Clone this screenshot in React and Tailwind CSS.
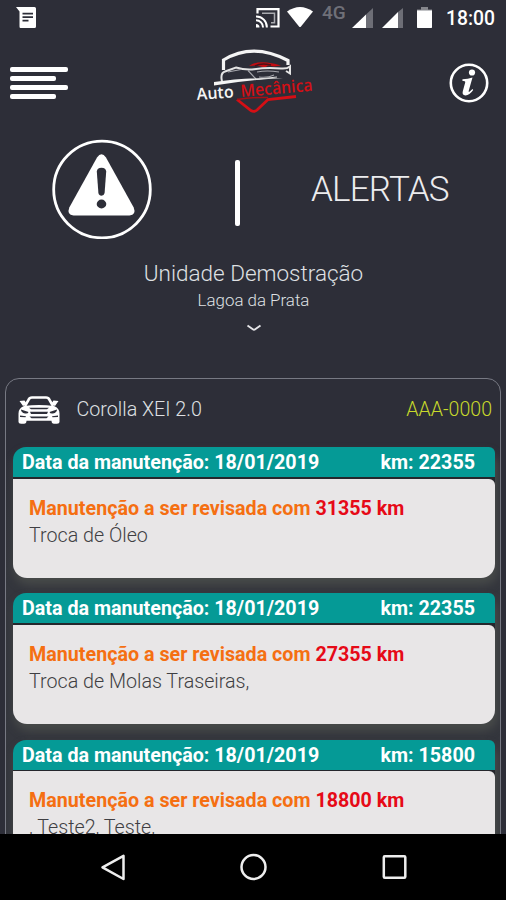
const reviews = [
    { id: 1, date: "18/01/2019", km: "22355", nextKm: "31355", items: "Troca de Óleo" },
    { id: 2, date: "18/01/2019", km: "22355", nextKm: "27355", items: "Troca de Molas Traseiras," },
    { id: 3, date: "18/01/2019", km: "15800", nextKm: "18800", items: ", Teste2, Teste," },
];

function StatusBar() {
    return (
        <div className="h-9 shrink-0 flex items-start pl-4 pr-[11px] pt-[7px] text-white">
            <svg className="w-[21px] h-[21px]" viewBox="0 0 21 21">
                <path d="M0 0h18.500q1.500 0 1.500 1.500v18q0 1.500-1.500 1.500h-14Q3.500 21 3.500 19.500V4.500Z" fill="#fff" />
                <path d="M6.500 6.700h10.500M6.500 10.200h10.500M6.500 13.700h6" stroke="#2d2e38" strokeWidth="1.700" />
            </svg>
            <svg className="ml-auto w-6 h-5 mt-px" viewBox="0 0 24 20" fill="none" stroke="#fff">
                <path d="M1.500 5.500V1.200H22.500V18.500H14.500" strokeWidth="2.200" />
                <path d="M6 5.200H18.500V14.800H15" strokeWidth="1.500" stroke="#aaabb0" />
                <path d="M0 8.500A10.500 10.500 0 0 1 10.800 19.500M0 12.300A7 7 0 0 1 7 19.500" strokeWidth="2" />
                <path d="M0 16q3.500.2 3.500 3.500H0Z" fill="#fff" stroke="none" />
            </svg>
            <svg className="ml-[7px] w-[26px] h-5" viewBox="0 0 26 20">
                <path d="M0 4.500Q13-4.500 26 4.500L14 19.500q-1 1-2 0Z" fill="#fff" />
            </svg>
            <span className="ml-[9px] w-[24px] -mt-[4px] text-[19px] leading-[20px] font-medium text-[#6f7078]">4G</span>
            <svg className="ml-[6px] mt-px w-[21px] h-5" viewBox="0 0 21 20">
                <path d="M14 6.500 21 0V20H14Z" fill="#6d6e76" />
                <path d="M0 20 14 6.500V20Z" fill="#fff" />
            </svg>
            <svg className="ml-[9px] mt-px w-[21px] h-5" viewBox="0 0 21 20">
                <path d="M16 4 21 0V20H16Z" fill="#6d6e76" />
                <path d="M0 20 16 4V20Z" fill="#fff" />
            </svg>
            <svg className="ml-[14px] w-[15px] h-[21px]" viewBox="0 0 15 21">
                <path d="M4 0h7v2.500h4V21H0V2.500H4Z" fill="#85868c" />
                <path d="M0 3.500h15V20q0 1-1 1H1q-1 0-1-1Z" fill="#fff" />
            </svg>
            <span className="ml-[13px] w-[50px] mt-px text-right text-[19.300px] leading-[22px] font-medium">18:00</span>
        </div>
    );
}

function Logo() {
    return (
        <svg className="w-[120px] h-[68px]" viewBox="0 0 120 68" fill="none">
            <path d="M28.500 24V14Q58-4 93 14.500V19" stroke="#f4f4f4" strokeWidth="3.200" />
            <path d="M54 20Q61 15 72 16.500Q80 17.500 86 19.500L79 20.500 73 19.500 70 21.500 62 19.500Z" fill="#c40d12" />
            <path d="M60 20q6-3.500 16-1" stroke="#4c1118" strokeWidth="1.500" />
            <path d="M27 35.500Q25 27 30 25.500L41 21.500Q49 24 57 23.500Q72 21 86 22.500Q92 23 95 20.500V27.500L91 25" stroke="#e4e4e4" strokeWidth="2" />
            <path d="M33 26 46 23.500M53 24.500l8 8.500M62 26q10-2 22 0M64 31q9 1 15-2" stroke="#a7a7ad" strokeWidth="1.100" />
            <path d="M19 36Q50 31.500 88 32Q50 34 19 39.500Z" fill="#f4f4f4" />
            <path d="M59 33.500 82 31" stroke="#dedede" />
            <text x="2" y="54" transform="rotate(-4 2 53)" fill="#f5f5f5" fontFamily="Open Sans, sans-serif" fontSize="16.500" fontWeight="600" textLength="37" lengthAdjust="spacingAndGlyphs">Auto</text>
            <text x="46" y="51" transform="rotate(-5 46 50)" fill="#d40f15" fontFamily="Open Sans, sans-serif" fontSize="17" fontWeight="600" textLength="72" lengthAdjust="spacingAndGlyphs">Mecânica</text>
            <path d="M42 53.500 56 64.500Q59 66.500 62 64L73 53.500 101 50.500" stroke="#d40f15" strokeWidth="2.800" />
            <path d="M42 53.500Q58 51 73 51.500" stroke="#a80e14" strokeWidth="1.500" />
        </svg>
    );
}

function AppBar() {
    return (
        <header className="h-[92px] shrink-0 flex pl-[10px] pr-[17px]">
            <button className="w-[58px] h-8 mt-[31px] flex flex-col justify-between">
                <span className="block w-[58px] h-[5px] rounded-[2px] bg-white" />
                <span className="block w-[46px] h-[5px] rounded-[2px] bg-white" />
                <span className="block w-[58px] h-[5px] rounded-[2px] bg-white" />
                <span className="block w-[46px] h-[5px] rounded-[2px] bg-white" />
            </button>
            <div className="mt-[10px] ml-[127px]">
                <Logo />
            </div>
            <button className="w-10 h-10 mt-[27px] ml-auto">
                <svg className="w-10 h-10" viewBox="0 0 40 40">
                    <circle cx="20" cy="20" r="18.200" fill="none" stroke="#fff" strokeWidth="2.600" />
                    <circle cx="23" cy="9.500" r="3.100" fill="#fff" />
                    <path d="M13.500 16.300Q19 16 23.500 14.500L19.800 27.500Q19.200 29.800 21 28.300L23.500 26 24.200 27Q20.500 32.400 16.400 32.400Q12.800 32 13.800 28.200L16.200 19.500Q16.700 17.800 13.300 17.800Z" fill="#fff" />
                </svg>
            </button>
        </header>
    );
}

function PageTitle() {
    return (
        <section className="h-[124px] shrink-0 flex items-start pl-[52px]">
            <svg className="w-[100px] h-[100px] mt-[11px]" viewBox="0 0 100 100">
                <circle cx="50" cy="50.500" r="48.300" fill="none" stroke="#fff" strokeWidth="2.800" />
                <path d="M45 18.500Q49.500 12 54 18.500L81.700 68.500Q84.500 75.800 77.500 76.500H21.500Q14.500 75.800 17.300 68.500Z" fill="#fff" />
                <path d="M44.800 32.500Q45 28.700 49.500 28.700T54.200 32.500L52.600 54Q52 56.800 49.500 56.800T46.400 54Z" fill="#2d2e38" />
                <ellipse cx="49.500" cy="65" rx="4.800" ry="4.400" fill="#2d2e38" />
            </svg>
            <div className="ml-[83px] mt-8 w-[5px] h-[66px] rounded-[2px] bg-white" />
            <h1 className="ml-[71px] mt-[41px] text-[35px] leading-[42px] font-light tracking-[-0.800px] text-[#ececee]">ALERTAS</h1>
        </section>
    );
}

function UnitSelect() {
    return (
        <section className="h-[126px] shrink-0 flex flex-col items-center pt-[7px] text-[#dfe0e3]">
            <p className="pl-px text-[22.500px] leading-[28px] font-light">Unidade Demostração</p>
            <p className="mt-[2px] pl-px text-[16.900px] leading-[22px] font-light">Lagoa da Prata</p>
            <svg className="mt-[13px] ml-px w-4 h-2" viewBox="0 0 16 8" fill="none">
                <path d="M1.500 1.500 6.800 5.300Q8 6.300 9.200 5.300L14.500 1.500" stroke="#e5e5e8" strokeWidth="1.900" />
            </svg>
        </section>
    );
}

function CarIcon() {
    return (
        <svg className="w-[42px] h-7" viewBox="0 0 42 28" fill="none" stroke="#fff">
            <path d="M7 10 10.800 3.500Q11.500 1.500 14 1.500H28Q30.500 1.500 31.200 3.500L35 10" strokeWidth="2.600" />
            <path d="M1.500 5 6.500 4.500 9 8 5 10ZM40.500 5 35.500 4.500 33 8 37 10Z" fill="#fff" stroke="none" />
            <path d="M6 10Q21 8 36 10Q41.500 12 41.500 17.500V26Q41.500 27.800 39 27.800H36Q33.500 27.800 33.500 24.800H8.500Q8.500 27.800 6 27.800H3Q.500 27.800.500 26V17.500Q.500 12 6 10Z" fill="#fff" stroke="none" />
            <path d="M3 13.500 10.500 16Q10 18 7 17.500Q3 16.500 3 13.500ZM39 13.500 31.500 16Q32 18 35 17.500Q39 16.500 39 13.500Z" fill="#2d2e38" stroke="none" />
            <path d="M11 11.800H31L29 13.200H13ZM12 15.800H30L29 18H13ZM11.500 20.500H30.500L28.500 22.200H13.500ZM2 19.500 8 20.300 7.500 21.300 2 21ZM40 19.500 34 20.300 34.500 21.300 40 21Z" fill="#2d2e38" stroke="none" />
        </svg>
    );
}

function ReviewCard({ review }) {
    return (
        <article className="w-[482px] h-[131px] shrink-0 rounded-[14px] shadow-[2px_6px_9px_1px_#474a49]">
            <div className="h-[30px] flex justify-between items-start pl-[9.500px] pr-[19.500px] pt-px rounded-tl-[13px] rounded-tr-[6px] bg-[#059a96] text-[19.700px] leading-[30px] font-bold text-white">
                <span>Data da manutenção: {review.date}</span>
                <span>km: {review.km}</span>
            </div>
            <div className="h-[101px] bg-[#25272d] pt-[1.500px] rounded-b-[15px]">
                <div className="h-full pl-[16.500px] pt-[16px] rounded-tr-[6px] rounded-b-[14px] bg-[#e8e6e7]">
                    <p className="text-[19.700px] leading-[27px] font-bold text-[#f56f12]">
                        Manutenção a ser revisada com <span className="text-[#e60a17]">{review.nextKm} km</span>
                    </p>
                    <p className="text-[19.700px] leading-[27px] font-light text-[#3f3f43]">{review.items}</p>
                </div>
            </div>
        </article>
    );
}

function NavBar() {
    return (
        <nav className="h-[66px] shrink-0 bg-black flex items-start justify-between pl-[100px] pr-[99px] pt-5">
            <svg className="w-[26px] h-[27px]" viewBox="0 0 26 27" fill="none">
                <path d="M23.500 1.800V25L2.500 13.400Z" stroke="#eee" strokeWidth="2.500" strokeLinejoin="round" />
            </svg>
            <svg className="w-7 h-7 -ml-[1px] -mt-px" viewBox="0 0 28 28" fill="none">
                <circle cx="13.500" cy="14" r="12" stroke="#eee" strokeWidth="2.500" />
            </svg>
            <svg className="w-[25px] h-[26px]" viewBox="0 0 25 26" fill="none">
                <rect x="1.800" y="2.300" width="21.500" height="21.500" rx="1" stroke="#eee" strokeWidth="2.500" />
            </svg>
        </nav>
    );
}

export default function App() {
    return (
        <div className="w-[506px] h-[900px] flex flex-col overflow-hidden bg-[#2d2e38] font-['Roboto',sans-serif]">
            <StatusBar />
            <AppBar />
            <PageTitle />
            <UnitSelect />
            {/* Vehicle and its pending reviews */}
            <main className="flex-1 min-h-0 overflow-hidden px-[5px]">
                <div className="h-[600px] w-[496px] overflow-hidden rounded-[14px] border-[1.500px] border-[#777983] bg-linear-to-b from-[#2d2e38] from-[70px] to-[#34363d] to-[190px]">
                    <div className="h-[68px] flex items-center pl-[12px] pr-[8px] pb-[7px]">
                        <CarIcon />
                        <h2 className="ml-[16.500px] pt-px text-[19.700px] leading-6 font-light text-[#dfe0e3]">Corolla XEI 2.0</h2>
                        <span className="ml-auto pt-px text-[19.600px] leading-6 font-light text-[#c8d92b]">AAA-0000</span>
                    </div>
                    <div className="flex flex-col gap-[15.300px] pl-[6.500px]">
                        {reviews.map((r) => (
                            <ReviewCard key={r.id} review={r} />
                        ))}
                    </div>
                </div>
            </main>
            <NavBar />
        </div>
    );
}
